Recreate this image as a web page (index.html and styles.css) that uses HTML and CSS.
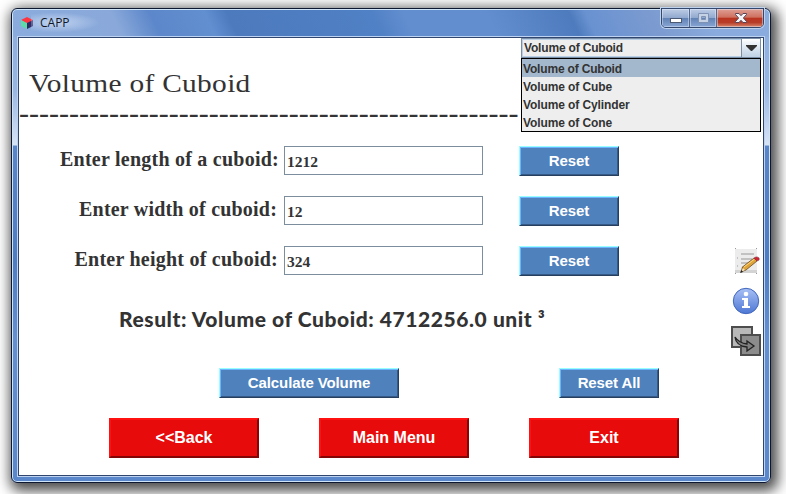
FILE: index.html
```
<!DOCTYPE html>
<html lang="en">
<head>
<meta charset="utf-8">
<title>CAPP</title>
<link rel="stylesheet" href="styles.css">
</head>
<body>
<div class="window">
  <header class="titlebar">
    <svg class="app-icon" width="13" height="13" viewBox="0 0 13 13"><path fill="#ff343e" d="M0 3 6 0l6 3-6 4z"/><path fill="#5cdba8" d="m0 3 6 3v6l-6-3z"/><path fill="#302b66" d="m12 3-6 3v6l6-3z"/></svg>
    <span class="caption">CAPP</span>
    <div class="controls">
      <span class="control minimize"><svg width="28" height="18" viewBox="0 0 28 18"><rect x="8.5" y="9.5" width="11" height="4" fill="#fff" stroke="#4c5972"/></svg></span>
      <span class="control maximize"><svg width="26" height="18" viewBox="0 0 26 18"><path fill="#c5d2e6" fill-rule="evenodd" stroke="#8092b3" d="M8.500 4.500h10v9h-10zM11.500 7.500v3h4v-3z"/></svg></span>
      <span class="control close"><svg width="46" height="18" viewBox="0 0 46 18"><path d="M18.500 4.500h3.500l2 2.200 2-2.200h3.500v1L26.400 9l3.100 3.500v1H26l-2-2.200-2 2.200h-3.500v-1L21.600 9l-3.100-3.500z" fill="#f4f4f6" stroke="#55465a"/></svg></span>
    </div>
  </header>
  <main class="content">
    <h1>Volume of Cuboid</h1>
    <div class="divider">--------------------------------------------------</div>
    <div class="fields">
      <div class="field"><label for="len" class="lbl-length">Enter length of a cuboid:</label><input id="len" value="1212"><button class="btn blue">Reset</button></div>
      <div class="field"><label for="wid" class="lbl-width">Enter width of cuboid:</label><input id="wid" value="12"><button class="btn blue">Reset</button></div>
      <div class="field"><label for="hei" class="lbl-height">Enter height of cuboid:</label><input id="hei" value="324"><button class="btn blue">Reset</button></div>
    </div>
    <p class="result">Result: Volume of Cuboid: 4712256.0 unit ³</p>
    <div class="actions"><button class="btn blue calculate">Calculate Volume</button><button class="btn blue">Reset All</button></div>
    <nav class="navigation"><button class="btn red">&lt;&lt;Back</button><button class="btn red">Main Menu</button><button class="btn red">Exit</button></nav>
    <div class="dropdown">
      <div class="selected"><span>Volume of Cuboid</span><i class="arrow"><svg width="11" height="6" viewBox="0 0 11 6"><path fill="#333" d="M0 0h11v1L6 6H5L0 1z"/></svg></i></div>
      <ul><li class="active">Volume of Cuboid</li><li>Volume of Cube</li><li>Volume of Cylinder</li><li>Volume of Cone</li></ul>
    </div>
    <aside class="tools">
      <svg width="27" height="28" viewBox="0 0 27 28">
        <path fill="#ececec" d="M1 1h22v24H1z"/><path fill="#d3d3d3" d="M1 22h22v3H1z"/>
        <path stroke="#c2c2c2" stroke-width="2" d="M7 6h13M7 11h11M7 15h9M8 19h5"/><path stroke="#999" d="M1 .500h1M22 .500h1M1 25.500h1M22 25.500h1M3 10h1M3 18h1"/>
        <path fill="#dfa33b" stroke="#684b26" stroke-width=".8" d="m7 24 1.500-5L20 10l3 3-11 9z"/><path stroke="#ffd77c" d="M10 19 20 11.500"/><path fill="#f6e2bd" d="m7 24 2-4 2 2z"/><path fill="#222" d="m6 25 1.500-3 1.500 2z"/><path fill="#d51f32" stroke="#8e3540" stroke-width=".7" d="m20 10 2-1q4 0 3 3l-2 1z"/>
      </svg>
      <svg width="28" height="28" viewBox="0 0 28 28">
        <defs><linearGradient id="info-fill" x2="0" y2="1"><stop stop-color="#a8c0f5"/><stop offset="1" stop-color="#4e77d4"/></linearGradient></defs>
        <circle cx="14" cy="14" r="12.700" fill="url(#info-fill)" stroke="#4268bd"/><circle cx="14" cy="7" r="2.300" fill="#fff"/><path fill="#fff" d="M10 11h6v8h2v2h-8v-2h2v-6h-2z"/>
      </svg>
      <svg width="30" height="30" viewBox="0 0 30 30">
        <path fill="#b8b8b8" stroke="#4d4d4d" stroke-width="2" d="M1 1h20v20H1z"/><path fill="#8c8c8c" stroke="#4d4d4d" stroke-width="2" d="M10 9h19v20H10z"/>
        <path fill="#808080" stroke="#222" stroke-width="1.300" d="M4 11q4 6 12 7v-3l7 5-7 5v-4Q5 20 4 11z"/>
      </svg>
    </aside>
  </main>
</div>
</body>
</html>
```

FILE: styles.css
```
* { box-sizing: border-box; }
body {
  margin: 0;
  width: 786px;
  height: 494px;
  padding: 8px 0 0 11px;
  overflow: hidden;
  background: #fff;
  font-family: "Liberation Sans", sans-serif;
  color: #333;
}
.window {
  width: 760px;
  height: 475px;
  padding: 0 6px 6px;
  border: 1px solid #0d1730;
  border-radius: 6px;
  background:
    linear-gradient(65deg, #8aabdd 0, #8aa9da 100px, #5c87ca 135px, #628fd0 185px, #4d7abd 205px, #5080c5 335px, #628ecf 365px, #628ecf 440px, #4e7bbd 515px, #6992d1 530px, #7c9bd0 590px, #8aabdd 640px) 0 0 / 100% 28px no-repeat,
    linear-gradient(#8aabdd 0, #98b6e3 80px, #d8e4f6 136px, #5985c9 137px, #4e7cc3 250px, #6490d1 330px, #5a87cb 100%);
  box-shadow: inset 0 0 0 1px #cfe4f7, 3px 4px 13px 4px rgba(0,0,0,.7);
}
.titlebar {
  height: 27px;
  display: flex;
  align-items: flex-start;
  padding: 8px 0 0 2px;
}
.app-icon {
  flex: none;
  margin: 0 0 0 1px;
}
.caption {
  width: 70px;
  margin: -5px 0 0 -3px;
  padding-left: 9px;
  font: 12px/21px "Open Sans", sans-serif;
  color: #101828;
  background: radial-gradient(ellipse at 35% 50%, rgba(225,235,250,.65), transparent 68%);
}
.controls {
  display: flex;
  height: 20px;
  margin: -9px 0 0 auto;
  border: 1px solid #34476c;
  border-radius: 0 0 5px 5px;
  overflow: hidden;
  box-shadow: 0 0 0 1px #bed1ed;
}
.control {
  height: 18px;
  background: linear-gradient(#bdcce5, #92aad0 48%, #6383b5 52%, #87a6d5);
  border-right: 1px solid #53698e;
  box-shadow: inset 0 0 0 1px rgba(230,240,255,.45);
}
.control svg { display: block; }
.minimize { width: 28px; }
.maximize { width: 27px; }
.close {
  width: 46px;
  border: 0;
  background: linear-gradient(#dfa095, #ce705f 46%, #b93420 50%, #b83d29 75%, #d8886e);
}
.content {
  position: relative;
  width: 746px;
  height: 439px;
  margin-top: 1px;
  border: 1px solid #30466e;
  background: #fff;
  box-shadow: 0 0 0 1px #bdd3f1;
}
h1 {
  width: 210px;
  height: 32px;
  margin: 30px 0 0;
  padding-left: 10px;
  transform: scaleX(1.13);
  transform-origin: 10px 0;
  font: 26px/32px "Liberation Serif", serif;
  letter-spacing: .28px;
  white-space: nowrap;
}
.divider {
  width: 502px;
  height: 36px;
  margin-top: -5px;
  font: 30px/36px "Liberation Serif", serif;
  white-space: nowrap;
}
.fields {
  display: grid;
  gap: 20px;
  margin-top: 15px;
}
.field {
  display: flex;
  height: 30px;
}
label {
  width: 265px;
  padding-right: 5px;
  font: bold 20px/27px "Liberation Serif", serif;
  letter-spacing: .24px;
  text-align: right;
  white-space: nowrap;
}
.lbl-width { padding-right: 7px; letter-spacing: .2px; }
.lbl-height { padding-right: 6px; letter-spacing: .24px; }
input {
  width: 199px;
  height: 29px;
  padding: 3px 1px 0 2px;
  margin: 0;
  border: 1px solid #7c8d9e;
  background: #fff;
  color: #333;
  font: bold 15.500px "Liberation Serif", serif;
}
.btn {
  height: 30px;
  width: 100px;
  padding: 0;
  margin: 0;
  color: #fff;
  font: bold 15px "Liberation Sans", sans-serif;
  border-radius: 0;
}
.field .btn { margin-left: 36px; }
.blue {
  border: 1px solid;
  border-color: #97ffff #263f5f #263f5f #97ffff;
  background: #4f81bd;
  box-shadow: inset 1px 1px #6bb5ff, inset -1px -1px #365a85;
  padding-bottom: 2px;
  letter-spacing: -.1px;
}
.result {
  width: 440px;
  height: 30px;
  margin: 28px 0 0 100px;
  font: 900 21px/30px Lato, sans-serif;
  letter-spacing: .56px;
  white-space: nowrap;
}
.actions {
  display: flex;
  gap: 160px;
  margin: 34px 0 0 200px;
}
.calculate { width: 180px; }
.navigation {
  display: flex;
  gap: 60px;
  margin: 20px 0 0 90px;
}
.red {
  width: 150px;
  height: 40px;
  border: 2px solid;
  border-color: #ff1111 #830505 #830505 #ff1111;
  background: #e80b0b;
  font-size: 16px;
}
.dropdown {
  position: absolute;
  left: 502px;
  top: 0;
  width: 240px;
  font: bold 12px/18px "Liberation Sans", sans-serif;
  letter-spacing: -.1px;
}
.selected {
  display: flex;
  height: 20px;
  border: 1px solid #7a8fa5;
  background: #eee;
  box-shadow: inset 0 0 0 1px #b8cfe5;
}
.selected span {
  flex: 1;
  padding-left: 2px;
  letter-spacing: -.18px;
}
.arrow {
  width: 19px;
  border-left: 1px solid #7a8fa5;
  display: flex;
  align-items: center;
  justify-content: center;
  background: linear-gradient(#fff, #dce7f2 50%, #bfd1e4);
}
ul {
  height: 74px;
  margin: 0;
  padding: 0;
  list-style: none;
  border: 1px solid #000;
  background: #eee;
}
li {
  height: 18px;
  padding: 1px 0 0 1px;
}
.active {
  background: #a3b8cc;
  letter-spacing: -.18px;
}
.tools {
  position: absolute;
  top: 210px;
  left: 712px;
  display: grid;
  gap: 11px;
}
.tools svg { display: block; }
.tools svg:first-child { margin-left: 3px; }
.tools svg:nth-child(2) { margin-left: 1px; }
```
